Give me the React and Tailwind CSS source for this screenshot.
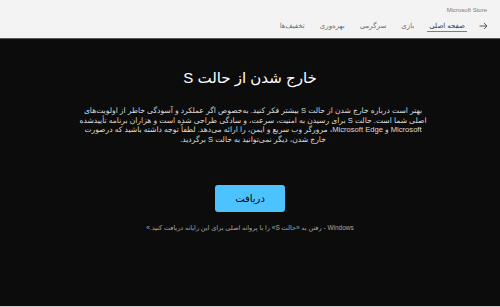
import React from "react";

const F = { fontFamily: '"Liberation Sans", "DejaVu Sans", sans-serif' };

export default function App() {
  return (
    <div className="w-[500px] h-[307px] flex flex-col overflow-hidden bg-[#0c0c0c]" style={F}>
      <div className="h-[38px] bg-[#f3f3f3] relative shrink-0">
        <div className="absolute right-[13px] top-[6px] text-[6px] text-[#7a7a7a]">Microsoft Store</div>
        <div dir="rtl" className="absolute right-[12px] top-[21px] flex items-center gap-[15px] text-[7px] text-[#6b6b6b]">
          <svg width="9" height="8" viewBox="0 0 9 8" className="ml-[-1px]">
            <path d="M0.5 4H8M5 1L8 4L5 7" stroke="#444" strokeWidth="0.9" fill="none" />
          </svg>
          <div className="relative text-[#333]">
            صفحه اصلی
            <div className="absolute left-[-2px] right-[-2px] top-[10px] h-[1px] bg-[#3b8fd6]" />
          </div>
          <div>بازی</div>
          <div>سرگرمی</div>
          <div>بهره‌وری</div>
          <div>تخفیف‌ها</div>
        </div>
      </div>
      <div className="h-[1px] bg-[#5a5a5a] shrink-0" />
      <div className="flex-1 flex flex-col items-center pt-[28px]">
        <div dir="rtl" className="text-[15px] leading-[22px] text-white">خارج شدن از حالت S</div>
        <div dir="rtl" className="mt-[17px] text-[7.6px] leading-[9.6px] text-[#dcdcdc] text-center whitespace-nowrap ml-[6px]">
          <div>بهتر است درباره خارج شدن از حالت S بیشتر فکر کنید. به‌خصوص اگر عملکرد و آسودگی خاطر از اولویت‌های</div>
          <div>اصلی شما است. حالت S برای رسیدن به امنیت، سرعت، و سادگی طراحی شده است و هزاران برنامه تأییدشده</div>
          <div>Microsoft و Microsoft Edge، مرورگر وب سریع و ایمن، را ارائه می‌دهد. لطفاً توجه داشته باشید که درصورت</div>
          <div>خارج شدن، دیگر نمی‌توانید به حالت S برگردید.</div>
        </div>
        <div className="mt-[41px] w-[70px] h-[27px] rounded-[3px] bg-[#4cc2ff] flex items-center justify-center text-[10px] text-black" dir="rtl">
          دریافت
        </div>
        <div dir="rtl" className="mt-[11px] text-[6.5px] text-[#a8a8a8]">
          Windows - رفتن به «حالت S» را با پروانه اصلی برای این رایانه دریافت کنید.»
        </div>
      </div>
      <div className="h-[1px] bg-[#cfcfcf] shrink-0" />
    </div>
  );
}
